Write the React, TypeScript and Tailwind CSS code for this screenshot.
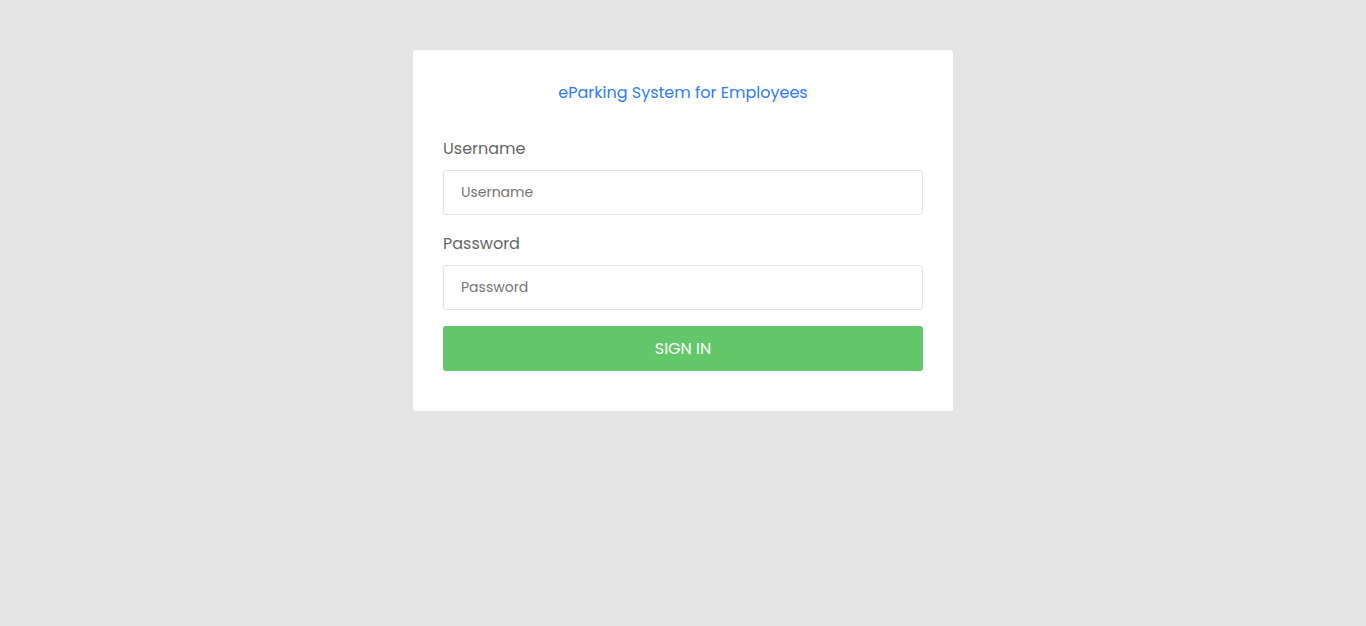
import { useState } from "react";

export default function App() {
  const [username, setUsername] = useState("");
  const [password, setPassword] = useState("");

  return (
    <div
      className="min-h-[626px] w-full bg-[#e5e5e5] pt-[50px]"
      style={{ fontFamily: 'Poppins, "Open Sans", "Noto Sans", sans-serif' }}
    >
      <div className="mx-auto w-[540px] rounded-[3px] bg-white px-[30px] pt-[31px] pb-[40px]">
        <h1 className="text-center text-[16px] leading-[24px] font-normal text-[#2f7cf6]">
          eParking System for Employees
        </h1>

        <form className="mt-[32px]" onSubmit={(e) => e.preventDefault()}>
          <label className="block text-[16px] leading-[24px] text-[#666666]">Username</label>
          <input
            type="text"
            value={username}
            onChange={(e) => setUsername(e.target.value)}
            placeholder="Username"
            className="mt-[9px] block h-[45px] w-full rounded-[3px] border border-[#e2e2e2] px-[17px] text-[14px] text-[#555] outline-none placeholder:text-[#757575]"
          />

          <label className="mt-[17px] block text-[16px] leading-[24px] text-[#666666]">Password</label>
          <input
            type="password"
            value={password}
            onChange={(e) => setPassword(e.target.value)}
            placeholder="Password"
            className="mt-[9px] block h-[45px] w-full rounded-[3px] border border-[#e2e2e2] px-[17px] text-[14px] text-[#555] outline-none placeholder:text-[#757575]"
          />

          <button
            type="submit"
            className="mt-[16px] block h-[45px] w-full rounded-[3px] bg-[#63c76a] text-[16px] text-white"
          >
            SIGN IN
          </button>
        </form>
      </div>
    </div>
  );
}
